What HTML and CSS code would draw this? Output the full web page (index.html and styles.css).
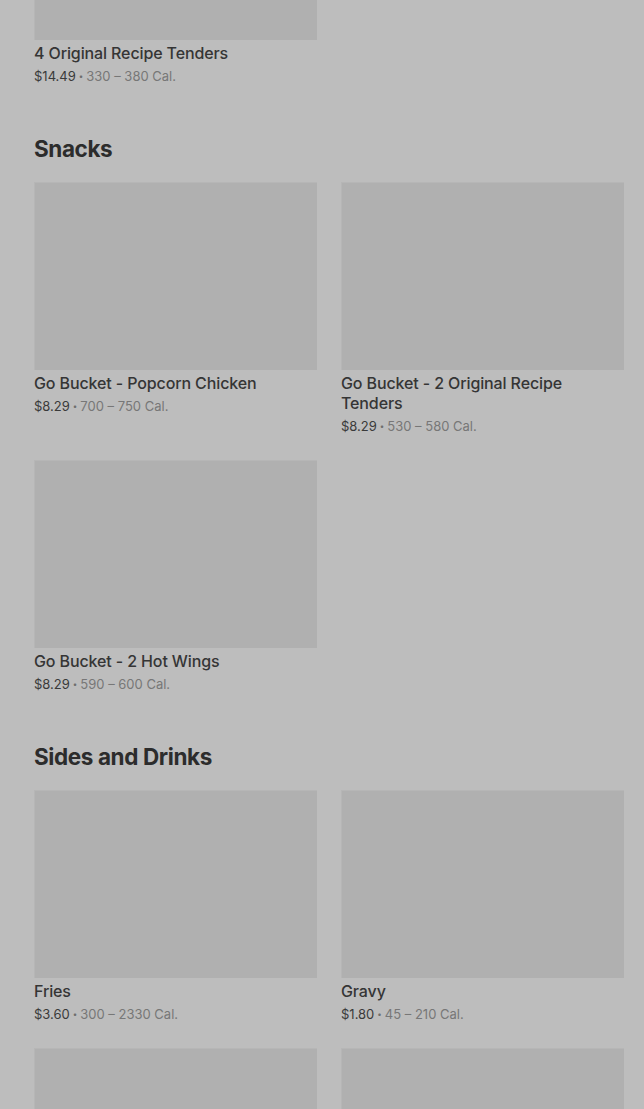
FILE: index.html
```html
<!DOCTYPE html>
<html lang="en">
<head>
<meta charset="utf-8">
<title>Menu</title>
<link rel="stylesheet" href="styles.css">
</head>
<body>
<main class="menu">
  <section class="section">
    <div class="grid">
      <article class="item">
        <div class="thumb"></div>
        <h3 class="name">4 Original Recipe Tenders</h3>
        <p class="meta"><span class="price">$14.49</span><span class="dot">•</span><span class="cal">330 – 380 Cal.</span></p>
      </article>
    </div>
  </section>

  <section class="section">
    <h2 class="heading">Snacks</h2>
    <div class="grid">
      <article class="item">
        <div class="thumb"></div>
        <h3 class="name">Go Bucket - Popcorn Chicken</h3>
        <p class="meta"><span class="price">$8.29</span><span class="dot">•</span><span class="cal">700 – 750 Cal.</span></p>
      </article>
      <article class="item">
        <div class="thumb"></div>
        <h3 class="name">Go Bucket - 2 Original Recipe Tenders</h3>
        <p class="meta"><span class="price">$8.29</span><span class="dot">•</span><span class="cal">530 – 580 Cal.</span></p>
      </article>
      <article class="item">
        <div class="thumb"></div>
        <h3 class="name">Go Bucket - 2 Hot Wings</h3>
        <p class="meta"><span class="price">$8.29</span><span class="dot">•</span><span class="cal">590 – 600 Cal.</span></p>
      </article>
    </div>
  </section>

  <section class="section">
    <h2 class="heading">Sides and Drinks</h2>
    <div class="grid">
      <article class="item">
        <div class="thumb"></div>
        <h3 class="name">Fries</h3>
        <p class="meta"><span class="price">$3.60</span><span class="dot">•</span><span class="cal">300 – 2330 Cal.</span></p>
      </article>
      <article class="item">
        <div class="thumb"></div>
        <h3 class="name">Gravy</h3>
        <p class="meta"><span class="price">$1.80</span><span class="dot">•</span><span class="cal">45 – 210 Cal.</span></p>
      </article>
      <article class="item">
        <div class="thumb"></div>
      </article>
      <article class="item">
        <div class="thumb"></div>
      </article>
    </div>
  </section>
</main>
</body>
</html>
```

FILE: styles.css
```css
html, body {
  margin: 0;
  padding: 0;
  background: #bdbdbd;
  overflow: hidden;
}

body {
  font-family: Inter, "Noto Sans", sans-serif;
  color: #2f2f2f;
}

.menu {
  margin-top: -148px;
  padding: 0 20px 0 34px;
  display: flex;
  flex-direction: column;
  gap: 47px;
}

.heading {
  margin: 0 0 17px;
  font-size: 22.5px;
  line-height: 32px;
  font-weight: 700;
  letter-spacing: -0.4px;
  color: #2c2c2c;
}

.grid {
  display: grid;
  grid-template-columns: 283px 283px;
  column-gap: 24px;
  row-gap: 24px;
  align-items: start;
}

.item {
  display: flex;
  flex-direction: column;
}

.thumb {
  height: 188px;
  background: #b0b0b0;
  box-shadow: inset 1px 1px 0 #b6b6b6;
}

.name {
  margin: 3px 0 0;
  font-size: 16px;
  line-height: 20px;
  font-weight: 500;
  letter-spacing: -0.12px;
  color: #353535;
}

.meta {
  margin: 3px 0 0;
  font-size: 13px;
  line-height: 20px;
  display: flex;
  align-items: center;
}

.price {
  color: #3a3a3a;
}

.dot {
  color: #6e6e6e;
  margin: 0 3px;
  font-size: 8px;
}

.cal {
  color: #777777;
}
```
